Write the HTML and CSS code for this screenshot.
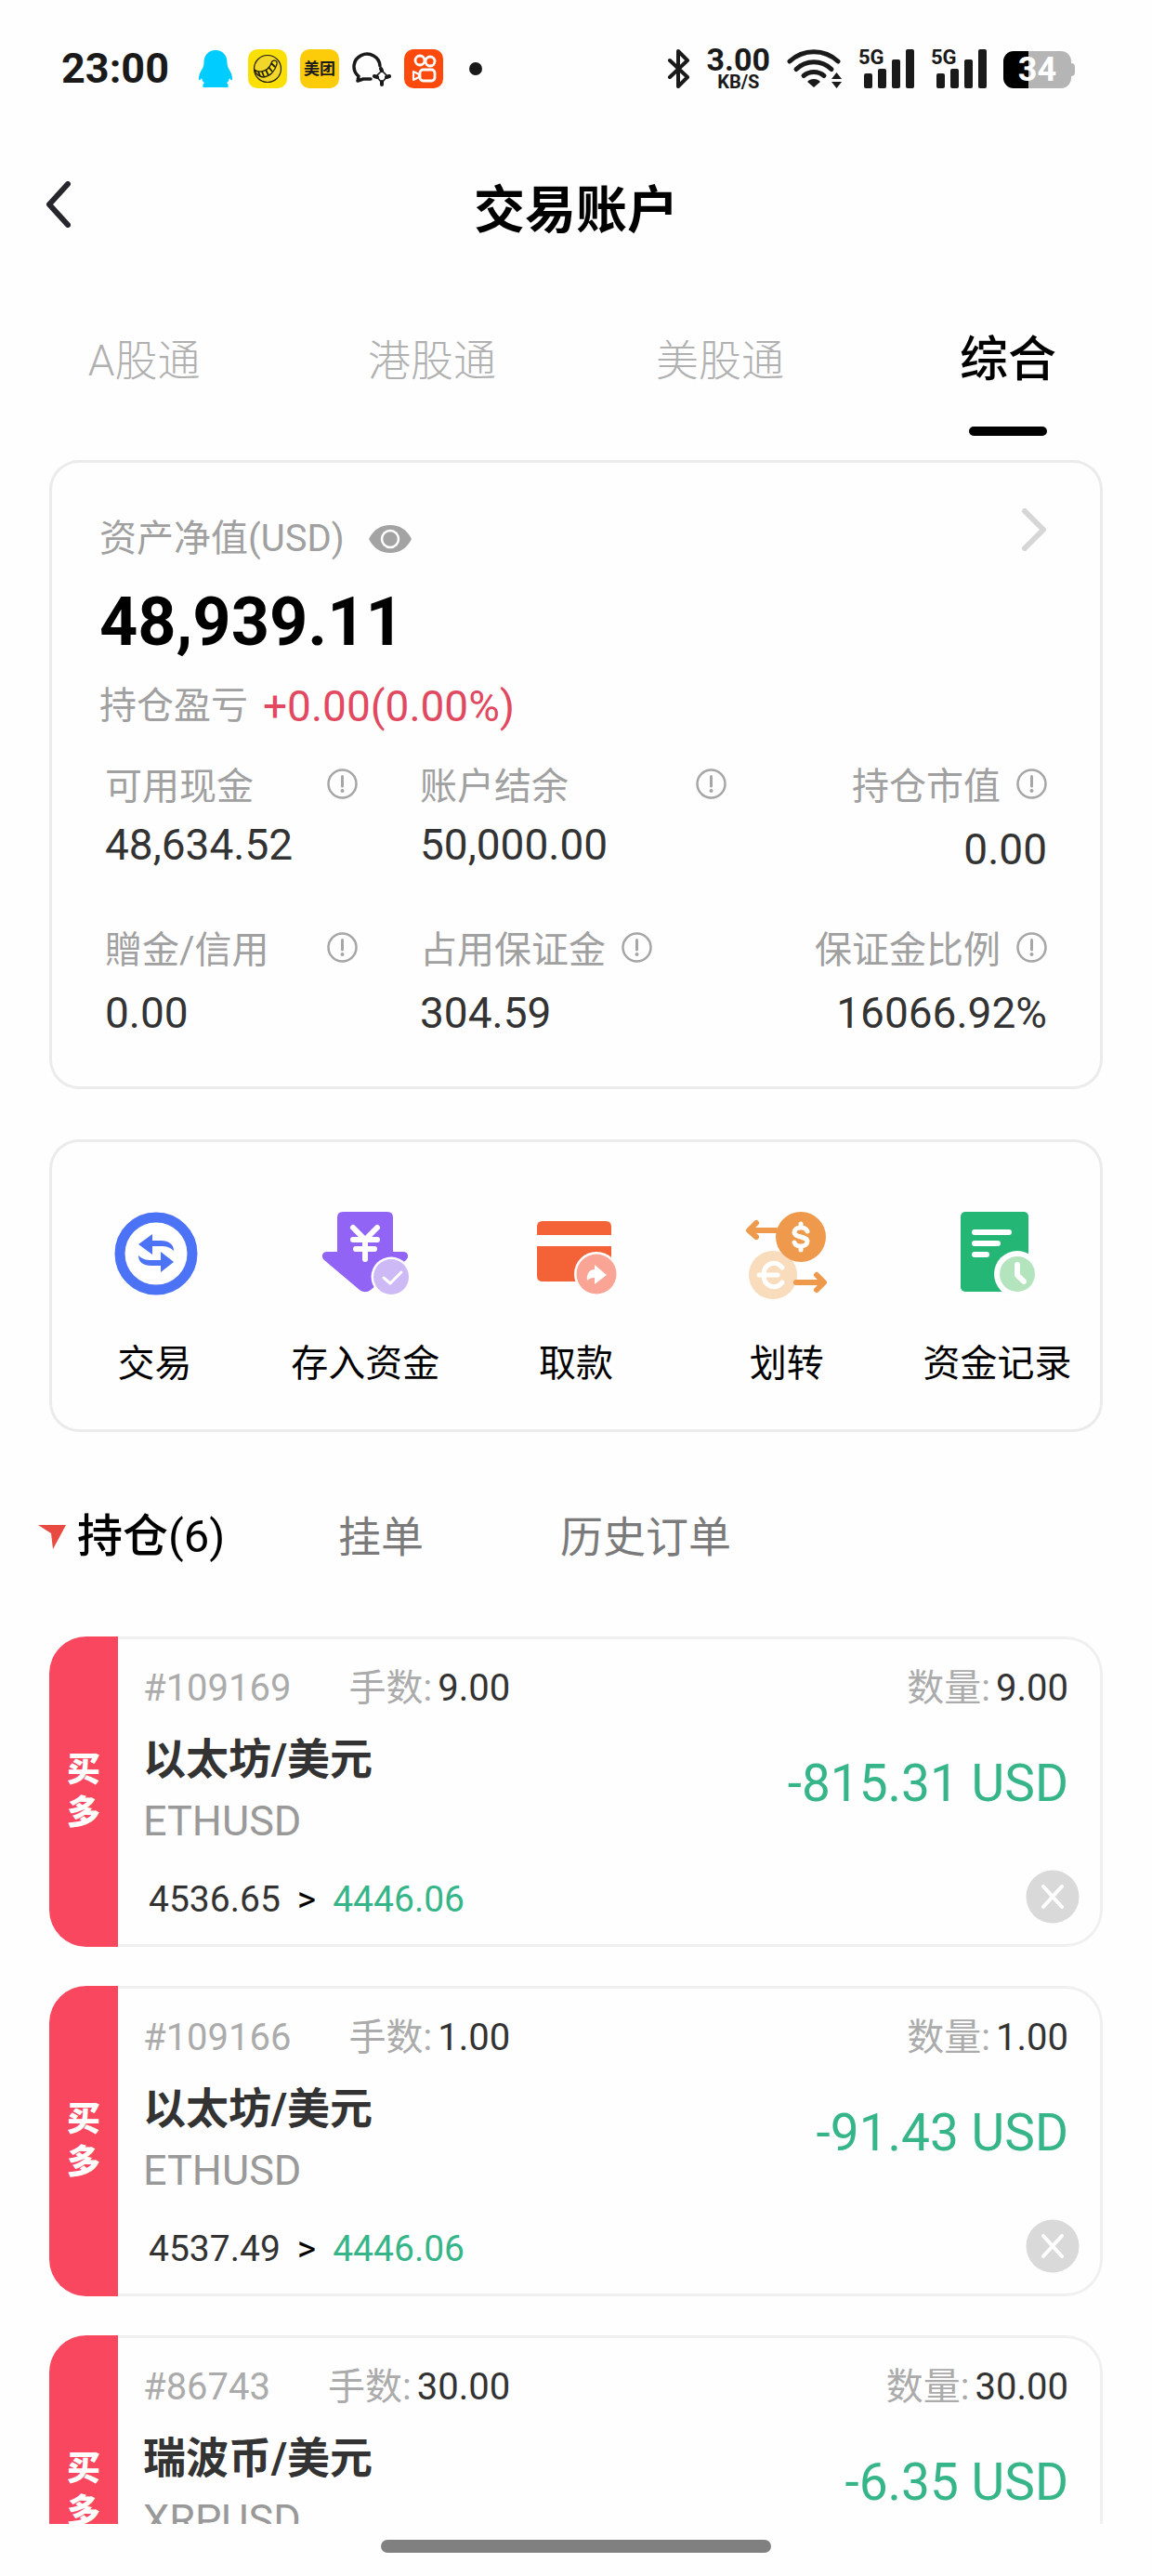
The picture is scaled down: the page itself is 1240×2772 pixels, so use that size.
FILE: index.html
```html
<!DOCTYPE html>
<html lang="zh-CN">
<head>
<meta charset="utf-8">
<meta name="viewport" content="width=device-width, initial-scale=1">
<title>交易账户</title>
<link rel="stylesheet" href="styles.css">
</head>
<body>
<svg class="defs" aria-hidden="true">
  <symbol id="info" viewBox="0 0 33 33">
    <circle cx="16.500" cy="16.500" r="15" fill="none" stroke="#a6a6a6" stroke-width="2.500"/>
    <path d="M16.500 8.500v10.500" stroke="#a6a6a6" stroke-width="3" stroke-linecap="round"/>
    <circle cx="16.500" cy="24" r="2" fill="#a6a6a6"/>
  </symbol>
  <symbol id="close" viewBox="0 0 58 58">
    <circle cx="29" cy="29" r="28.500" fill="#d9d9d9"/>
    <path d="M19 18l20 22M39 18L19 40" stroke="#fff" stroke-width="4" stroke-linecap="round"/>
  </symbol>
  <symbol id="bars" viewBox="0 0 60 42">
    <g fill="#1a1a1a"><rect x="6" y="26" width="9" height="16" rx="2"/><rect x="21" y="21" width="9" height="21" rx="2"/><rect x="36" y="11" width="9" height="31" rx="2"/><rect x="51" y="0" width="9" height="42" rx="2"/></g>
  </symbol>
</svg>

<div class="status">
  <div class="status-left">
    <span class="time">23:00</span>
    <svg width="42" height="42" viewBox="0 0 42 42"><path d="M21 1c-8 0-12.500 6-12.500 13 0 3-.5 4-1 5.500C5 24 2.500 28 3 33c1 1 2-.500 3-2 .5 2.500 1.500 4 3 5.500-1.500.5-2 2-1.500 4.500h27c.5-2.500 0-4-1.500-4.500 1.500-1.500 2.500-3 3-5.500 1 1.500 2 3 3 2 .5-5-2-9-4.500-13.500-.5-1.500-1-2.500-1-5.500C33.500 7 29 1 21 1z" fill="#00ccff"/></svg>
    <svg width="42" height="42" viewBox="0 0 42 42"><rect width="42" height="42" rx="10" fill="#fbe008"/><circle cx="21" cy="21" r="14.500" fill="#f2d62a"/><path d="M7 22c5 4 15 2 18-7 1-4 7-4 6 1-2 7-7 13-14 14-4 0-9-3-10-8z" fill="#f8e018" stroke="#221e08" stroke-width="1.300"/><path d="M11 24l2 5M15 24l2 5M19 22l3 6M22 19l4 5M25 15l4 4" stroke="#221e08" stroke-width="1.800"/><circle cx="21" cy="21" r="14.500" fill="none" stroke="#221e08" stroke-width="1.200"/></svg>
    <span class="app-badge">美团</span>
    <svg width="42" height="42" viewBox="0 0 42 42" fill="none" stroke="#1a1a1a" stroke-linecap="round"><path d="M30 18A14 13.500 0 1 0 7 29l-1 5 6-2h8" stroke-width="3.500" stroke-linejoin="round"/><path d="M31 21l1 2M24 29l3 1M32 38v-3M40 29l-3 1" stroke-width="4"/><path d="M32 23l-6 6 6 7 6-7z" stroke-width="1.600"/></svg>
    <svg width="42" height="42" viewBox="0 0 42 42"><rect width="42" height="42" rx="10" fill="#fb4a0b"/><g fill="none" stroke="#fff" stroke-width="2.800"><circle cx="17" cy="12" r="5"/><circle cx="28" cy="13" r="5"/><rect x="17" y="22" width="16" height="12" rx="3.500"/><path d="M16 27l-6-3v9l6-3z" stroke-width="2.200" stroke-linejoin="round"/></g></svg>
    <span class="dot"></span>
  </div>
  <div class="status-right">
    <svg width="25" height="42" viewBox="0 0 25 42"><path d="M3 12l19 18-10 10V2l10 10L3 30" fill="none" stroke="#1a1a1a" stroke-width="4" stroke-linejoin="round" stroke-linecap="round"/></svg>
    <span class="speed"><b>3.00</b><small>KB/S</small></span>
    <svg width="59" height="42" viewBox="0 0 59 42"><g fill="none" stroke="#1a1a1a" stroke-width="5" stroke-linecap="round"><path d="M3 13a38 38 0 0 1 52 0"/><path d="M10 21.500a27 27 0 0 1 38 0"/><path d="M18 28.500a17 17 0 0 1 22 0"/></g><path d="M29 41l-7-6c3-4 11-4 14 0zM53.500 25l5.500 7H48zM48 35h11l-5.500 7z" fill="#1a1a1a"/></svg>
    <span class="signal"><svg width="60" height="42"><use href="#bars"/></svg><i>5G</i></span>
    <span class="signal"><svg width="60" height="42"><use href="#bars"/></svg><i>5G</i></span>
    <span class="battery">34</span>
  </div>
</div>

<header class="header">
  <button class="back" aria-label="返回"><svg width="26" height="50" viewBox="0 0 26 50"><path d="M23 3L3 25l20 22" fill="none" stroke="#26262c" stroke-width="6" stroke-linecap="round" stroke-linejoin="round"/></svg></button>
  <h1>交易账户</h1>
</header>

<main>
  <nav class="markets">
    <button>A股通</button>
    <button>港股通</button>
    <button>美股通</button>
    <button class="active">综合</button>
  </nav>

  <section class="card assets">
    <div class="assets-head">
      <span class="label">资产净值(USD)</span>
      <button aria-label="隐藏金额"><svg width="46" height="30" viewBox="0 0 46 30"><path d="M0 15C5 5 13 0 23 0s18 5 23 15c-5 10-13 15-23 15S5 25 0 15z" fill="#a3a3a3"/><circle cx="23" cy="15" r="9" fill="#a3a3a3" stroke="#fff" stroke-width="2.500"/></svg></button>
      <a class="more" href="#" aria-label="详情"><svg width="28" height="46" viewBox="0 0 28 46"><path d="M4 3l20 20L4 43" fill="none" stroke="#d6d6d6" stroke-width="6" stroke-linecap="round" stroke-linejoin="round"/></svg></a>
    </div>
    <p class="total">48,939.11</p>
    <p class="profit"><span class="label">持仓盈亏</span><span class="rise">+0.00(0.00%)</span></p>
    <dl class="stats">
      <div class="compact spread"><dt>可用现金<svg><use href="#info"/></svg></dt><dd>48,634.52</dd></div>
      <div class="compact spread"><dt>账户结余<svg><use href="#info"/></svg></dt><dd>50,000.00</dd></div>
      <div class="end"><dt>持仓市值<svg><use href="#info"/></svg></dt><dd>0.00</dd></div>
      <div class="spread"><dt>贈金/信用<svg><use href="#info"/></svg></dt><dd>0.00</dd></div>
      <div><dt>占用保证金<svg><use href="#info"/></svg></dt><dd>304.59</dd></div>
      <div class="end"><dt>保证金比例<svg><use href="#info"/></svg></dt><dd>16066.92%</dd></div>
    </dl>
  </section>

  <section class="card actions">
    <button>
      <svg viewBox="0 0 96 96"><circle cx="50" cy="45" r="39" fill="#fff" stroke="#4c72f5" stroke-width="11"/><path d="M31 35l15-11v7h9c9 0 14 4 14 11-4-4-8-5-14-5h-9v9z" fill="#4c72f5"/><path d="M69 54L55 65v-7H45c-9 0-14-4-14-11 4 4 8 5 14 5h10v-9z" fill="#4c72f5"/></svg>
      <span>交易</span>
    </button>
    <button>
      <svg viewBox="0 0 96 96"><path d="M24 0h48q6 0 6 6v37h11c5 0 7 5 3 9L54 84c-4 3-8 3-12 0L4 52c-4-4-2-9 3-9h11V6q0-6 6-6z" fill="#9264f6"/><g fill="none" stroke="#fff" stroke-width="6" stroke-linecap="round"><path d="M35 17l13 13 13-13M35 30h26M38 40h20M48 30v21"/></g><circle cx="76" cy="70" r="21.500" fill="#fff"/><circle cx="76" cy="70" r="19" fill="#cdb9f6"/><path d="M68 71l7 6 12-12" fill="none" stroke="#fff" stroke-width="3" stroke-linecap="round" stroke-linejoin="round"/></svg>
      <span>存入资金</span>
    </button>
    <button>
      <svg viewBox="0 0 96 96"><path d="M12 10h68q6 0 6 6v9H6v-9q0-6 6-6zM6 37h80v38H12q-6 0-6-6z" fill="#f46238"/><circle cx="70" cy="67" r="24" fill="#fff"/><circle cx="70" cy="67" r="21.500" fill="#f9a494"/><path d="M60 74c-1-8 3-12 8-12v-5l13 11-13 10v-7c-4 0-6 1-8 3z" fill="#fff"/></svg>
      <span>取款</span>
    </button>
    <button>
      <svg viewBox="0 0 96 96"><circle cx="33" cy="68" r="26" fill="#f9dcbb"/><path d="M43 60c-8-9-20-4-20 8s12 17 20 8M18 68h20" fill="none" stroke="#fff" stroke-width="5" stroke-linecap="round"/><circle cx="63" cy="27" r="27" fill="#ee994b"/><path d="M70 21c-2-6-14-5-14 1s14 4 14 10-12 7-14 1M63 15v-2M63 41v-2" fill="none" stroke="#fff" stroke-width="5" stroke-linecap="round"/><path d="M36 20H8M15 12l-8 8 8 7M58 76h28M80 68l8 8-8 8" fill="none" stroke="#ee994b" stroke-width="6" stroke-linecap="round" stroke-linejoin="round"/></svg>
      <span>划转</span>
    </button>
    <button>
      <svg viewBox="0 0 96 96"><rect x="8" width="73" height="86" rx="5" fill="#24b675"/><path d="M23 22h37M23 34h25M23 46h13" stroke="#fff" stroke-width="6" stroke-linecap="round"/><circle cx="69" cy="67" r="25" fill="#fff"/><circle cx="69" cy="67" r="19" fill="#b4e4bd"/><path d="M69 57v11l7 7" fill="none" stroke="#fff" stroke-width="6" stroke-linecap="round" stroke-linejoin="round"/></svg>
      <span>资金记录</span>
    </button>
  </section>

  <nav class="orders-nav">
    <button class="active"><svg width="30" height="26" viewBox="0 0 30 26"><path d="M0 0h30L16 26 14 9z" fill="#e84a42"/></svg><span>持仓<span class="count">(6)</span></span></button>
    <button>挂单</button>
    <button>历史订单</button>
  </nav>

  <ul class="positions">
    <li class="position">
      <div class="side">买多</div>
      <div class="detail">
        <div class="meta"><span>#109169</span><span>手数:<b>9.00</b></span><span>数量:<b>9.00</b></span></div>
        <div class="middle"><div><h2>以太坊/美元</h2><p>ETHUSD</p></div><strong>-815.31 USD</strong></div>
        <div class="prices"><span>4536.65</span><i>&gt;</i><span class="fall">4446.06</span><button aria-label="平仓"><svg width="58" height="58"><use href="#close"/></svg></button></div>
      </div>
    </li>
    <li class="position">
      <div class="side">买多</div>
      <div class="detail">
        <div class="meta"><span>#109166</span><span>手数:<b>1.00</b></span><span>数量:<b>1.00</b></span></div>
        <div class="middle"><div><h2>以太坊/美元</h2><p>ETHUSD</p></div><strong>-91.43 USD</strong></div>
        <div class="prices"><span>4537.49</span><i>&gt;</i><span class="fall">4446.06</span><button aria-label="平仓"><svg width="58" height="58"><use href="#close"/></svg></button></div>
      </div>
    </li>
    <li class="position">
      <div class="side">买多</div>
      <div class="detail">
        <div class="meta"><span>#86743</span><span>手数:<b>30.00</b></span><span>数量:<b>30.00</b></span></div>
        <div class="middle"><div><h2>瑞波币/美元</h2><p>XRPUSD</p></div><strong>-6.35 USD</strong></div>
      </div>
    </li>
  </ul>
</main>

<footer class="home"><span></span></footer>
</body>
</html>
```
FILE: styles.css
```css
* {
  box-sizing: border-box;
  margin: 0;
  padding: 0;
}

body {
  display: flex;
  flex-direction: column;
  height: 100vh;
  background: #fefefe;
  color: #333;
  font-family: Roboto, "Noto Sans CJK SC", sans-serif;
  font-size: 40px;
  line-height: 48px;
}

button {
  border: 0;
  background: none;
  color: inherit;
  font: inherit;
  cursor: pointer;
}

svg {
  display: block;
  flex: none;
}

.defs {
  position: absolute;
  width: 0;
  height: 0;
}

/* System status bar */
.status {
  display: flex;
  flex: none;
  justify-content: space-between;
  align-items: center;
  height: 148px;
  padding: 0 83px 0 66px;
  color: #1a1a1a;
}

.status-left,
.status-right {
  display: flex;
  align-items: center;
  gap: 14px;
}

.status-right {
  gap: 18px;
}

.time {
  min-width: 131px;
  font-size: 45px;
  font-weight: 700;
}

.app-badge {
  width: 42px;
  height: 42px;
  border-radius: 10px;
  background: #fccb0a;
  font-size: 17px;
  font-weight: 700;
  line-height: 42px;
  text-align: center;
}

.dot {
  width: 14px;
  height: 14px;
  margin-left: 14px;
  border-radius: 50%;
  background: #1a1a1a;
}

.speed {
  display: flex;
  flex-direction: column;
  align-items: center;
}

.speed b {
  font-size: 34px;
  line-height: 28px;
}

.speed small {
  font-size: 20px;
  font-weight: 700;
  line-height: 20px;
}

.signal {
  position: relative;
}

.signal i {
  position: absolute;
  top: 0;
  left: 0;
  font-size: 22px;
  font-style: normal;
  font-weight: 700;
  line-height: 18px;
}

.battery {
  position: relative;
  width: 73px;
  height: 40px;
  margin: 2px 4px 0 0;
  border-radius: 11px;
  background: linear-gradient(90deg, #000 27px, #b5b5b5 27px);
  color: #fff;
  font-size: 36px;
  font-weight: 700;
  line-height: 40px;
  text-align: center;
}

.battery::after {
  content: "";
  position: absolute;
  top: 13px;
  right: -4px;
  width: 4px;
  height: 14px;
  border-radius: 0 4px 4px 0;
  background: #b5b5b5;
}

/* Title bar */
.header {
  display: grid;
  flex: none;
  grid-template-columns: 1fr auto 1fr;
  align-items: center;
  height: 156px;
  padding: 0 50px;
}

.back {
  justify-self: start;
  padding-bottom: 12px;
}

.header h1 {
  color: #000;
  font-size: 55px;
  font-weight: 700;
  line-height: 72px;
}

main {
  flex: 1;
  min-height: 0;
  overflow: hidden;
}

/* Market tabs */
.markets {
  display: grid;
  grid-template-columns: repeat(4, 1fr);
  padding-top: 52px;
  margin-bottom: 26px;
}

.markets button {
  display: flex;
  flex-direction: column;
  align-items: center;
  gap: 39px;
  color: #b0b0b0;
  font-size: 46px;
  font-weight: 300;
  line-height: 64px;
}

.markets .active {
  color: #000;
  font-size: 52px;
  font-weight: 500;
}

.markets .active::after {
  content: "";
  width: 84px;
  height: 10px;
  border-radius: 5px;
  background: #000;
}

.card {
  margin: 0 53px 54px;
  border-radius: 32px;
  box-shadow: inset 0 0 0 3px #ebebeb;
}

/* Asset summary */
.assets {
  padding: 57px 60px 54px 54px;
}

.assets-head {
  display: flex;
  align-items: center;
  height: 56px;
  margin-bottom: 20px;
}

.assets-head button {
  margin-left: 26px;
}

.more {
  margin-left: auto;
  padding-bottom: 20px;
}

.label {
  color: #a0a0a0;
}

.total {
  margin-bottom: 18px;
  color: #000;
  font-size: 72px;
  font-weight: 700;
  line-height: 84px;
}

.profit {
  display: flex;
  align-items: center;
  gap: 16px;
  margin-bottom: 33px;
  line-height: 60px;
}

.rise {
  color: #e0495f;
  font-size: 46px;
}

.stats {
  display: grid;
  grid-template-columns: 272fr 330fr 278fr;
  gap: 57px 67px;
  padding-left: 6px;
}

.stats div {
  display: flex;
  flex-direction: column;
  gap: 15px;
}

.stats .compact {
  gap: 10px;
}

.stats dt {
  display: flex;
  gap: 17px;
  color: #a0a0a0;
  white-space: nowrap;
}

.stats svg {
  width: 33px;
  height: 33px;
  margin-top: 4px;
}

.stats dd {
  font-size: 46px;
  line-height: 56px;
}

.stats .spread dt {
  justify-content: space-between;
}

.stats .end {
  align-items: flex-end;
}

/* Shortcuts */
.actions {
  display: grid;
  grid-template-columns: repeat(5, 1fr);
  padding: 78px 0 49px;
  margin-bottom: 81px;
}

.actions button {
  display: flex;
  flex-direction: column;
  align-items: center;
  gap: 44px;
  color: #000;
}

.actions svg {
  width: 96px;
  height: 96px;
}

/* Order tabs */
.orders-nav {
  display: grid;
  grid-template-columns: 323px 239px auto;
  justify-content: start;
  padding-left: 41px;
  margin-bottom: 75px;
  color: #7a7a7a;
  font-size: 46px;
  line-height: 64px;
}

.orders-nav button {
  display: flex;
  align-items: center;
  gap: 12px;
}

.orders-nav .active {
  color: #000;
  font-size: 49px;
  font-weight: 500;
}

.count {
  font-weight: 400;
}

/* Open positions */
.positions {
  display: flex;
  flex-direction: column;
  gap: 42px;
  margin: 0 53px;
  list-style: none;
}

.position {
  display: flex;
  min-height: 334px;
  border-radius: 40px;
  box-shadow: inset 0 0 0 3px #f0f0f0;
}

.side {
  display: flex;
  flex: none;
  align-items: center;
  width: 74px;
  padding: 0 19px;
  border-radius: 40px 0 0 40px;
  background: #f8475f;
  color: #fff;
  font-size: 36px;
  font-weight: 900;
  line-height: 46px;
}

.detail {
  flex: 1;
  padding: 32px 37px 25px 27px;
}

.meta {
  display: flex;
  gap: 62px;
  margin-bottom: 22px;
  color: #ababab;
}

.meta b {
  margin-left: 6px;
  color: #333;
  font-weight: 400;
}

.meta span:last-child {
  margin-left: auto;
}

.middle {
  display: flex;
  justify-content: space-between;
  margin-bottom: 24px;
}

.middle h2 {
  margin-bottom: 9px;
  font-size: 46px;
  font-weight: 700;
  line-height: 60px;
}

.middle p {
  color: #999;
  font-size: 45px;
  line-height: 56px;
}

.middle strong {
  color: #35b588;
  font-size: 55px;
  font-weight: 400;
  line-height: 112px;
}

.prices {
  display: flex;
  align-items: flex-end;
  gap: 18px;
  padding-left: 6px;
  margin-right: -12px;
  font-size: 39px;
  line-height: 52px;
}

.prices i {
  color: #000;
  font-style: normal;
}

.prices button {
  margin-left: auto;
}

.fall {
  color: #35b588;
}

/* Gesture bar */
.home {
  display: flex;
  flex: none;
  justify-content: center;
  height: 56px;
  padding-top: 17px;
}

.home span {
  width: 420px;
  height: 14px;
  border-radius: 7px;
  background: #808080;
}
```
